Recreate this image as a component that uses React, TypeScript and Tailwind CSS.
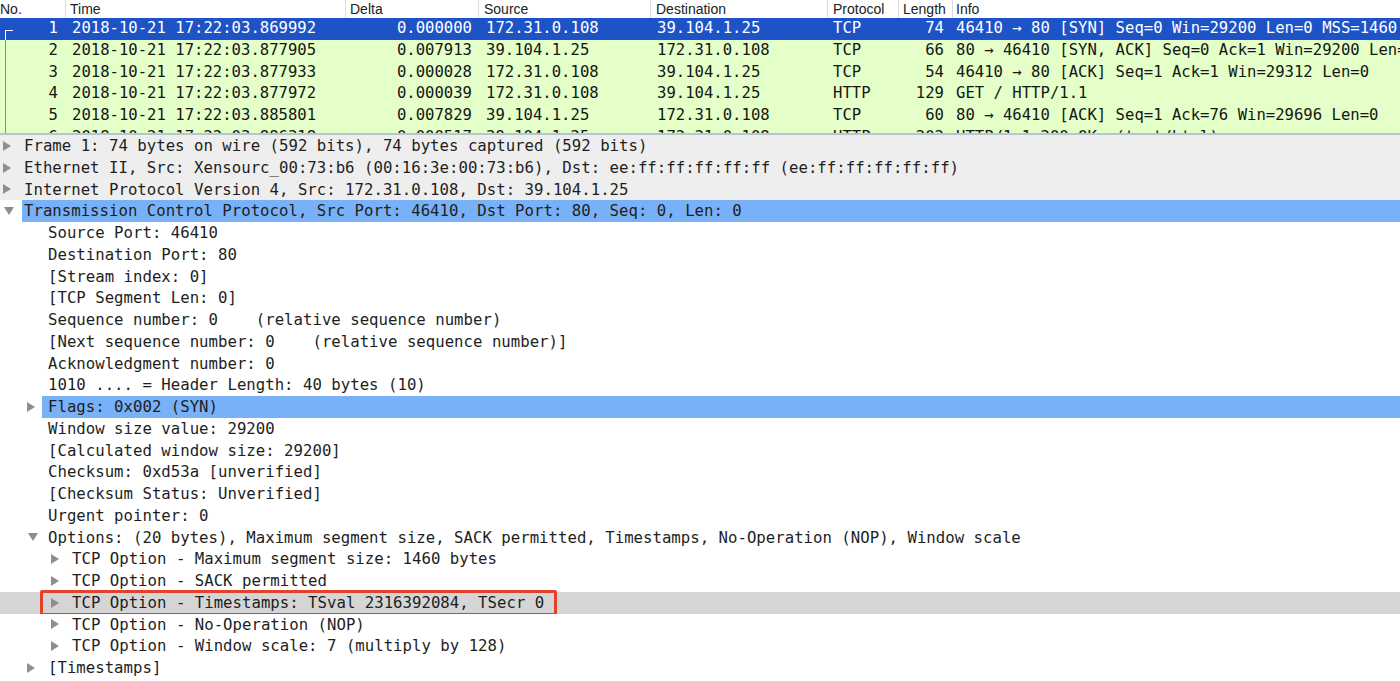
import React from "react";

type Packet = {
  no: string;
  time: string;
  delta: string;
  src: string;
  dst: string;
  proto: string;
  len: string;
  info: string;
};

const packets: Packet[] = [
  { no: "1", time: "2018-10-21 17:22:03.869992", delta: "0.000000", src: "172.31.0.108", dst: "39.104.1.25", proto: "TCP", len: "74", info: "46410 → 80 [SYN] Seq=0 Win=29200 Len=0 MSS=1460 SACK_PERM=1 TSval=2316392084 TSecr=0 WS=128" },
  { no: "2", time: "2018-10-21 17:22:03.877905", delta: "0.007913", src: "39.104.1.25", dst: "172.31.0.108", proto: "TCP", len: "66", info: "80 → 46410 [SYN, ACK] Seq=0 Ack=1 Win=29200 Len=0 MSS=1460 SACK_PERM=1 WS=128" },
  { no: "3", time: "2018-10-21 17:22:03.877933", delta: "0.000028", src: "172.31.0.108", dst: "39.104.1.25", proto: "TCP", len: "54", info: "46410 → 80 [ACK] Seq=1 Ack=1 Win=29312 Len=0" },
  { no: "4", time: "2018-10-21 17:22:03.877972", delta: "0.000039", src: "172.31.0.108", dst: "39.104.1.25", proto: "HTTP", len: "129", info: "GET / HTTP/1.1" },
  { no: "5", time: "2018-10-21 17:22:03.885801", delta: "0.007829", src: "39.104.1.25", dst: "172.31.0.108", proto: "TCP", len: "60", info: "80 → 46410 [ACK] Seq=1 Ack=76 Win=29696 Len=0" },
  { no: "6", time: "2018-10-21 17:22:03.886318", delta: "0.000517", src: "39.104.1.25", dst: "172.31.0.108", proto: "HTTP", len: "202", info: "HTTP/1.1 200 OK  (text/html)" },
];

type Detail = {
  text: string;
  level: number;
  arrow?: "right" | "down";
  hl?: "gray" | "blue" | "sel";
  boxed?: boolean;
};

const details: Detail[] = [
  { text: "Frame 1: 74 bytes on wire (592 bits), 74 bytes captured (592 bits)", level: 0, arrow: "right", hl: "gray" },
  { text: "Ethernet II, Src: Xensourc_00:73:b6 (00:16:3e:00:73:b6), Dst: ee:ff:ff:ff:ff:ff (ee:ff:ff:ff:ff:ff)", level: 0, arrow: "right", hl: "gray" },
  { text: "Internet Protocol Version 4, Src: 172.31.0.108, Dst: 39.104.1.25", level: 0, arrow: "right", hl: "gray" },
  { text: "Transmission Control Protocol, Src Port: 46410, Dst Port: 80, Seq: 0, Len: 0", level: 0, arrow: "down", hl: "blue" },
  { text: "Source Port: 46410", level: 1 },
  { text: "Destination Port: 80", level: 1 },
  { text: "[Stream index: 0]", level: 1 },
  { text: "[TCP Segment Len: 0]", level: 1 },
  { text: "Sequence number: 0    (relative sequence number)", level: 1 },
  { text: "[Next sequence number: 0    (relative sequence number)]", level: 1 },
  { text: "Acknowledgment number: 0", level: 1 },
  { text: "1010 .... = Header Length: 40 bytes (10)", level: 1 },
  { text: "Flags: 0x002 (SYN)", level: 1, arrow: "right", hl: "blue" },
  { text: "Window size value: 29200", level: 1 },
  { text: "[Calculated window size: 29200]", level: 1 },
  { text: "Checksum: 0xd53a [unverified]", level: 1 },
  { text: "[Checksum Status: Unverified]", level: 1 },
  { text: "Urgent pointer: 0", level: 1 },
  { text: "Options: (20 bytes), Maximum segment size, SACK permitted, Timestamps, No-Operation (NOP), Window scale", level: 1, arrow: "down" },
  { text: "TCP Option - Maximum segment size: 1460 bytes", level: 2, arrow: "right" },
  { text: "TCP Option - SACK permitted", level: 2, arrow: "right" },
  { text: "TCP Option - Timestamps: TSval 2316392084, TSecr 0", level: 2, arrow: "right", hl: "sel", boxed: true },
  { text: "TCP Option - No-Operation (NOP)", level: 2, arrow: "right" },
  { text: "TCP Option - Window scale: 7 (multiply by 128)", level: 2, arrow: "right" },
  { text: "[Timestamps]", level: 1, arrow: "right" },
];

const cols = "grid grid-cols-[65px_280px_133px_172px_177px_71px_54px_1fr]";

function Triangle({ dir }: { dir: "right" | "down" }) {
  return dir === "right" ? (
    <svg width="8" height="10" viewBox="0 0 8 10" className="block">
      <path d="M0 0 L8 5 L0 10 Z" fill="#8e8e8e" />
    </svg>
  ) : (
    <svg width="10" height="8" viewBox="0 0 10 8" className="block">
      <path d="M0 0 L10 0 L5 8 Z" fill="#8e8e8e" />
    </svg>
  );
}

function PacketRow({ p, first }: { p: Packet; first: boolean }) {
  const rowBg = first ? "bg-[#1d53c7] text-white" : "bg-[#e4ffc7] text-[#161616]";
  return (
    <div className={`${cols} h-[21.75px] leading-[21.75px] ${rowBg}`}>
      <div className="relative pr-[7px] text-right">
        {first ? (
          <div className="absolute left-[5px] top-[12px] h-[10px] w-[8px] border-l border-t border-white" />
        ) : (
          <div className="absolute left-[5px] top-0 h-full border-l border-[#8c8c8c]" />
        )}
        {p.no}
      </div>
      <div className="pl-[7px] whitespace-nowrap">{p.time}</div>
      <div className="pr-[6px] text-right whitespace-nowrap">{p.delta}</div>
      <div className="pl-[8px] whitespace-nowrap">{p.src}</div>
      <div className="pl-[7px] whitespace-nowrap">{p.dst}</div>
      <div className="pl-[6px] whitespace-nowrap">{p.proto}</div>
      <div className="pr-[8px] text-right whitespace-nowrap">{p.len}</div>
      <div className="pl-[4px] whitespace-pre overflow-hidden">{p.info}</div>
    </div>
  );
}

function DetailRow({ d }: { d: Detail }) {
  const spacer = d.level === 0 ? 22 : d.level * 24 + 18;
  const pad = d.level === 0 ? "pl-[2px]" : "pl-[6px]";
  const rowBg = d.hl === "gray" ? "bg-[#eeeeee]" : d.hl === "sel" ? "bg-[#d5d5d5]" : "bg-white";
  const textBg = d.hl === "blue" ? "bg-[#79b1f8]" : "";
  return (
    <div className={`relative flex h-[21.76px] leading-[21.76px] ${rowBg}`}>
      <div className="flex shrink-0 items-center" style={{ width: spacer }}>
        {d.arrow && (
          <div style={{ marginLeft: d.level * 24 + (d.arrow === "down" ? 4 : 3) }}>
            <Triangle dir={d.arrow} />
          </div>
        )}
      </div>
      <div className={`flex-1 whitespace-pre overflow-hidden ${pad} ${textBg}`}>{d.text}</div>
      {d.boxed && (
        <div className="absolute left-[40px] top-[-2px] h-[26px] w-[517px] rounded-[2px] border-[3px] border-[#e4412b]" />
      )}
    </div>
  );
}

export default function App() {
  return (
    <div className="h-[681px] w-full overflow-hidden bg-white text-[#1c1c1c]">
      {/* packet list */}
      <div className="h-[133px] overflow-hidden font-['DejaVu_Sans_Mono',monospace] text-[15.6px]">
        <div className={`${cols} h-[18px] items-center bg-white font-['Liberation_Sans',Arial,sans-serif] text-[14px] leading-[18px] text-[#222]`}>
          <div className="pl-0">No.</div>
          <div className="border-l border-[#dcdcdc] pl-[4px]">Time</div>
          <div className="border-l border-[#dcdcdc] pl-[4px]">Delta</div>
          <div className="border-l border-[#dcdcdc] pl-[5px]">Source</div>
          <div className="border-l border-[#dcdcdc] pl-[5px]">Destination</div>
          <div className="border-l border-[#dcdcdc] pl-[5px]">Protocol</div>
          <div className="border-l border-[#dcdcdc] pl-[4px] whitespace-nowrap overflow-hidden">Length</div>
          <div className="border-l border-[#dcdcdc] pl-[3px]">Info</div>
        </div>
        {packets.map((p, i) => (
          <PacketRow key={p.no} p={p} first={i === 0} />
        ))}
      </div>

      <div className="h-[2px] bg-[#b7c4d2]" />

      {/* packet details */}
      <div className="font-['DejaVu_Sans_Mono',monospace] text-[15.7px] text-[#1e1e1e]">
        {details.map((d, i) => (
          <DetailRow key={i} d={d} />
        ))}
      </div>
    </div>
  );
}
